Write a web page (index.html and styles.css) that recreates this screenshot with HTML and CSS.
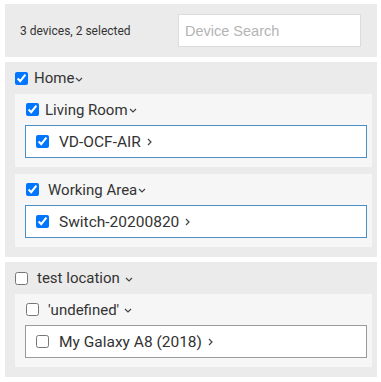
FILE: index.html
```html
<!DOCTYPE html>
<html lang="en">

<head>
    <meta charset="UTF-8">
    <meta name="viewport" content="width=device-width, initial-scale=1.0">
    <title>Devices</title>
    <link rel="stylesheet" href="styles.css">
</head>

<body>

    <header class="toolbar">
        <span class="summary">3 devices, 2 selected</span>
        <input class="search" type="text" placeholder="Device Search">
    </header>

    <section class="location">
        <label class="row row--location">
            <input type="checkbox" checked>
            <span class="name">Home</span><svg class="chev-down" viewBox="0 0 8 5"><path d="M1 1l3 3 3-3"/></svg>
        </label>

        <div class="room">
            <label class="row row--room">
                <input type="checkbox" checked>
                <span class="name">Living Room</span><svg class="chev-down" viewBox="0 0 8 5"><path d="M1 1l3 3 3-3"/></svg>
            </label>
            <label class="device device--active">
                <input type="checkbox" checked>
                <span class="name">VD-OCF-AIR</span>
                <svg class="chev-right" viewBox="0 0 5 8"><path d="M1 1l3 3-3 3"/></svg>
            </label>
        </div>

        <div class="room">
            <label class="row row--room">
                <input type="checkbox" checked>
                <span class="name name--wide">Working Area</span><svg class="chev-down" viewBox="0 0 8 5"><path d="M1 1l3 3 3-3"/></svg>
            </label>
            <label class="device device--active">
                <input type="checkbox" checked>
                <span class="name">Switch-20200820</span>
                <svg class="chev-right" viewBox="0 0 5 8"><path d="M1 1l3 3-3 3"/></svg>
            </label>
        </div>
    </section>

    <section class="location">
        <label class="row row--location">
            <input type="checkbox">
            <span class="name name--wide">test location</span>
            <svg class="chev-down chev-down--spaced" viewBox="0 0 8 5"><path d="M1 1l3 3 3-3"/></svg>
        </label>

        <div class="room">
            <label class="row row--room">
                <input type="checkbox">
                <span class="name name--wide">'undefined'</span>
                <svg class="chev-down chev-down--spaced" viewBox="0 0 8 5"><path d="M1 1l3 3 3-3"/></svg>
            </label>
            <label class="device">
                <input type="checkbox">
                <span class="name">My Galaxy A8 (2018)</span>
                <svg class="chev-right" viewBox="0 0 5 8"><path d="M1 1l3 3-3 3"/></svg>
            </label>
        </div>
    </section>

</body>

</html>
```

FILE: styles.css
```css
* {
    box-sizing: border-box;
}

body {
    font-family: Roboto, "Noto Sans", sans-serif;
    color: #333;
    margin: 4px 4px 0 5px;
}

.toolbar {
    display: flex;
    align-items: center;
    height: 53px;
    padding-left: 15px;
    background-color: #ebebeb;
}

.summary {
    font-size: 12px;
}

.search {
    margin-left: auto;
    margin-right: 16px;
    width: 183px;
    height: 33px;
    padding: 0 6px;
    border: 1px solid #dcdcdc;
    font-family: "Liberation Sans", Arial, sans-serif;
    font-size: 14.5px;
    outline: none;
}

.search::placeholder {
    color: #b4b4b4;
}

.location {
    margin-top: 5px;
    padding: 0 5px 10px 10px;
    background-color: #ebebeb;
}

.row {
    display: flex;
    align-items: center;
    font-size: 15px;
}

.row input {
    margin: 0;
    width: 13px;
    height: 13px;
}

.row--location {
    height: 32px;
}

.row--room {
    height: 31px;
}

.row--room input {
    margin-left: 1px;
}

.name {
    margin-left: 6px;
}

.name--wide {
    margin-left: 9px;
}

.chev-down {
    width: 8px;
    height: 5px;
    margin-left: 1px;
    margin-top: 2px;
    fill: none;
    stroke: #444;
    stroke-width: 1.2;
}

.chev-down--spaced {
    margin-left: 5px;
}

.room {
    padding: 0 5px 9px 10px;
    background-color: #f6f6f6;
}

.room + .room {
    margin-top: 7px;
}

.device {
    display: flex;
    align-items: center;
    height: 33px;
    padding-left: 10px;
    background-color: #fff;
    border: 1px solid #9a9a9a;
    font-size: 15.5px;
}

.device--active {
    border-color: #4b8fc4;
}

.device input {
    margin: 0;
    width: 13px;
    height: 13px;
}

.device .name {
    margin-left: 10px;
}

.chev-right {
    width: 5px;
    height: 8px;
    margin-left: 6px;
    fill: none;
    stroke: #444;
    stroke-width: 1.2;
}
```
